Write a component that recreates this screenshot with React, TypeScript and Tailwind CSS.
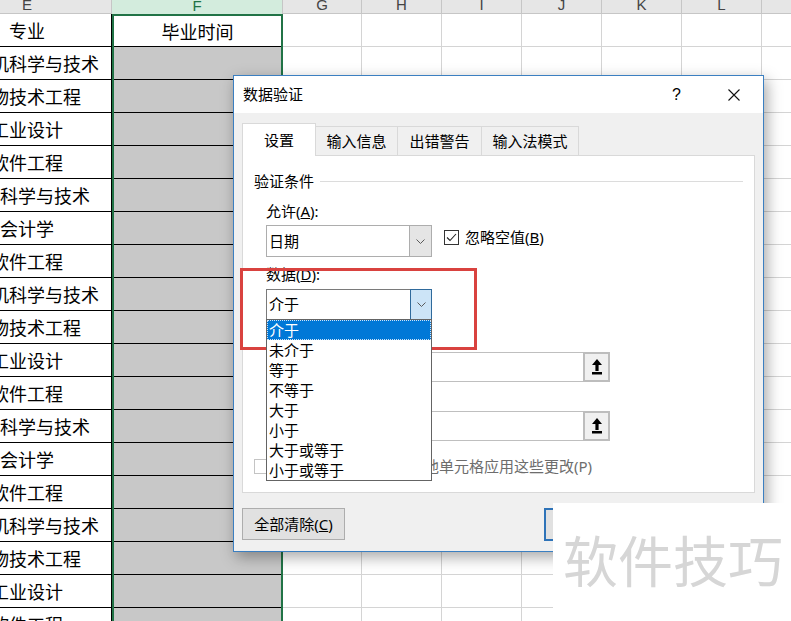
import React from "react";

const majors = [
  "专业",
  "计算机科学与技术",
  "生物技术工程",
  "工业设计",
  "软件工程",
  "电子科学与技术",
  "会计学",
  "软件工程",
  "计算机科学与技术",
  "生物技术工程",
  "工业设计",
  "软件工程",
  "电子科学与技术",
  "会计学",
  "软件工程",
  "计算机科学与技术",
  "生物技术工程",
  "工业设计",
  "软件工程",
];

// G..L, G is one pixel narrower because of the selection border
const cols = [
  { name: "G", w: "w-[79px]" },
  { name: "H", w: "w-[80px]" },
  { name: "I", w: "w-[80px]" },
  { name: "J", w: "w-[80px]" },
  { name: "K", w: "w-[80px]" },
  { name: "L", w: "w-[80px]" },
];

const options = ["介于", "未介于", "等于", "不等于", "大于", "小于", "大于或等于", "小于或等于"];

function Chevron() {
  return (
    <svg width="9" height="5" viewBox="0 0 9 5" fill="none">
      <path d="M0.5 0.5 4.5 4.5 8.5 0.5" stroke="#5a5a5a" strokeWidth="1" />
    </svg>
  );
}

function RangeButton() {
  return (
    <div className="w-[27px] h-full shrink-0 border-2 border-[#bdbdbd] bg-[#f0f0f0] flex items-center justify-center">
      <svg width="10" height="16" viewBox="0 0 10 16">
        <path d="M5 0 10 6H6.6V12H3.4V6H0Z" fill="#000" />
        <rect x="0" y="13" width="10" height="2.5" fill="#000" />
      </svg>
    </div>
  );
}

function Checkbox({ checked, disabled }: { checked?: boolean; disabled?: boolean }) {
  return (
    <div
      className={`w-[15px] h-[15px] shrink-0 border bg-white flex items-center justify-center ${
        disabled ? "border-[#c4c4c4]" : "border-[#333]"
      }`}
    >
      {checked && (
        <svg width="13" height="13" viewBox="0 0 13 13" fill="none">
          <path d="M2 6.5 5 9.5 11 3" stroke="#222" strokeWidth="1.1" />
        </svg>
      )}
    </div>
  );
}

function Sheet() {
  return (
    <div className="flex flex-col font-['Noto_Sans_CJK_SC',sans-serif] text-black">
      {/* column headers */}
      <div className="flex h-[14px] shrink-0 bg-[#e6e6e6] text-[15px] text-[#444] font-['Liberation_Sans',sans-serif]">
        <div className="-ml-[57px] w-[169px] shrink-0 border-r border-b border-[#c6c6c6] flex items-end justify-center overflow-hidden">
          <span className="leading-[15px] mb-[1px]">E</span>
        </div>
        <div className="w-[171px] shrink-0 bg-[#d3ecdd] border-r border-[#c6c6c6] flex items-end justify-center overflow-hidden text-[#217346]">
          <span className="leading-[15px] mb-[1px]">F</span>
        </div>
        {cols.map((c) => (
          <div
            key={c.name}
            className={`${c.w} shrink-0 border-r border-b border-[#c6c6c6] flex items-end justify-center overflow-hidden`}
          >
            <span className="leading-[15px] mb-[1px]">{c.name}</span>
          </div>
        ))}
        <div className="flex-1 border-b border-[#c6c6c6]" />
      </div>

      {majors.map((m, i) => (
        <div key={i} className="flex h-[33px] shrink-0 text-[18px]">
          <div className="-ml-[57px] w-[169px] shrink-0 border-r border-b border-black flex items-center justify-center whitespace-nowrap">
            {m}
          </div>
          <div
            className={`w-[171px] shrink-0 border-x-2 border-[#217346] ${
              i === 0 ? "border-t-2 bg-white" : "bg-[#c8c8c8]"
            }`}
          >
            <div className="h-full border-b border-black flex items-center justify-center">
              {i === 0 ? "毕业时间" : ""}
            </div>
          </div>
          {cols.map((c) => (
            <div key={c.name} className={`${c.w} shrink-0 border-r border-b border-[#d4d4d4]`} />
          ))}
          <div className="flex-1 border-b border-[#d4d4d4]" />
        </div>
      ))}
    </div>
  );
}

function Dialog() {
  return (
    <div className="absolute left-[233px] top-[75px] w-[531px] h-[477px] border border-[#3b7fc1] bg-[#f0f0f0] shadow-[3px_5px_14px_rgba(0,0,0,0.35)] flex flex-col text-[15px] text-black font-['Noto_Sans','Noto_Sans_CJK_SC',sans-serif]">
      {/* title bar */}
      <div className="h-[37px] shrink-0 bg-white flex items-center pl-[9px] pr-[23px]">
        <span>数据验证</span>
        <span className="ml-auto mr-[47px] font-['Liberation_Sans',sans-serif] text-[16px]">?</span>
        <svg width="12" height="12" viewBox="0 0 12 12">
          <path d="M0.5 0.5 11.5 11.5M11.5 0.5 0.5 11.5" stroke="#111" strokeWidth="1.1" />
        </svg>
      </div>

      {/* tabs */}
      <div className="mt-[10px] -mb-px px-[8px] h-[33px] flex items-end shrink-0">
        <div className="relative z-[1] w-[74px] h-[33px] bg-white border border-b-0 border-[#d9d9d9] flex items-center justify-center">
          设置
        </div>
        <div className="w-[82px] h-[30px] border border-l-0 border-[#d9d9d9] flex items-center justify-center">
          输入信息
        </div>
        <div className="w-[84px] h-[30px] border border-l-0 border-[#d9d9d9] flex items-center justify-center">
          出错警告
        </div>
        <div className="w-[97px] h-[30px] border border-l-0 border-[#d9d9d9] flex items-center justify-center">
          输入法模式
        </div>
      </div>

      {/* panel */}
      <div className="mx-[8px] h-[338px] shrink-0 bg-white border border-[#d9d9d9] pl-[11px] pr-[11px] flex flex-col">
        <div className="mt-[15px] h-[20px] flex items-center">
          <span>验证条件</span>
          <div className="flex-1 h-px bg-[#dcdcdc] ml-[6px]" />
        </div>

        <div className="pl-[12px] flex flex-col">
          <div className="mt-[10px] h-[20px] leading-[20px]">
            允许(<u>A</u>):
          </div>
          <div className="mt-[4px] flex items-start">
            <div className="w-[166px] h-[32px] border border-[#adadad] bg-white flex">
              <div className="flex-1 flex items-center pl-[2px]">日期</div>
              <div className="w-[22px] bg-[#e5e5e5] border-l border-[#adadad] flex items-center justify-center">
                <Chevron />
              </div>
            </div>
            <div className="ml-[12px] mt-[2px] h-[20px] flex items-center gap-[6px]">
              <Checkbox checked />
              <span>
                忽略空值(<u>B</u>)
              </span>
            </div>
          </div>

          <div className="mt-[7px] h-[20px] leading-[20px]">
            数据(<u>D</u>):
          </div>
          <div className="mt-[5px] relative w-[166px] h-[31px] border border-[#7a7a7a] bg-white flex">
            <div className="flex-1 flex items-center pl-[2px]">介于</div>
            <div className="w-[22px] -my-px -mr-px bg-[#cce4f7] border border-[#2f6a9c] flex items-center justify-center">
              <Chevron />
            </div>
            {/* open dropdown list */}
            <div className="absolute -left-px top-full w-[166px] h-[162px] z-30 bg-white border border-[#646464] flex flex-col">
              {options.map((o, i) => (
                <div
                  key={o}
                  className={`h-[20px] shrink-0 leading-[18px] pl-[1px] whitespace-nowrap ${
                    i === 0
                      ? "bg-[#0078d7] text-white border border-dotted border-[#cfe3f7]"
                      : "border border-transparent"
                  }`}
                >
                  {o}
                </div>
              ))}
            </div>
          </div>

          <div className="mt-[7px] h-[20px] leading-[20px]">
            开始日期(<u>S</u>):
          </div>
          <div className="mt-[5px] w-[344px] h-[30px] flex">
            <div className="flex-1 border border-r-0 border-[#bfbfbf] bg-white" />
            <RangeButton />
          </div>
          <div className="mt-[4px] h-[20px] leading-[20px]">
            结束日期(<u>N</u>):
          </div>
          <div className="mt-[5px] w-[344px] h-[30px] flex">
            <div className="flex-1 border border-r-0 border-[#bfbfbf] bg-white" />
            <RangeButton />
          </div>
        </div>

        <div className="mt-[17px] h-[16px] flex items-center gap-[5px] text-[#6d6d6d]">
          <Checkbox disabled />
          <span className="leading-[16px]">对有同样设置的所有其他单元格应用这些更改(P)</span>
        </div>
      </div>

      {/* footer buttons */}
      <div className="mt-[15px] px-[8px] pr-[9px] flex">
        <div className="w-[103px] h-[32px] bg-[#e1e1e1] border border-[#adadad] flex items-center justify-center">
          全部清除(<u>C</u>)
        </div>
        <div className="ml-auto w-[101px] h-[33px] bg-[#e1e1e1] border-2 border-[#2e73b8] flex items-center justify-center">
          确定
        </div>
        <div className="ml-[8px] w-[101px] h-[33px] bg-[#e1e1e1] border border-[#adadad] flex items-center justify-center">
          取消
        </div>
      </div>
    </div>
  );
}

export default function App() {
  return (
    <div className="relative w-[791px] h-[621px] overflow-hidden bg-white">
      <Sheet />
      <Dialog />
      {/* red annotation frame */}
      <div className="absolute left-[240px] top-[268px] w-[237px] h-[82px] border-[3px] border-[#d9423f]" />
      {/* watermark */}
      <div className="absolute left-[553px] top-[503px] right-0 bottom-0 z-40 bg-white pl-[10px] pt-[27px]">
        <div className="text-[55px] leading-[56px] text-[#d6d6d6] whitespace-nowrap font-['Noto_Sans_CJK_SC',sans-serif]">
          软件技巧
        </div>
      </div>
    </div>
  );
}
